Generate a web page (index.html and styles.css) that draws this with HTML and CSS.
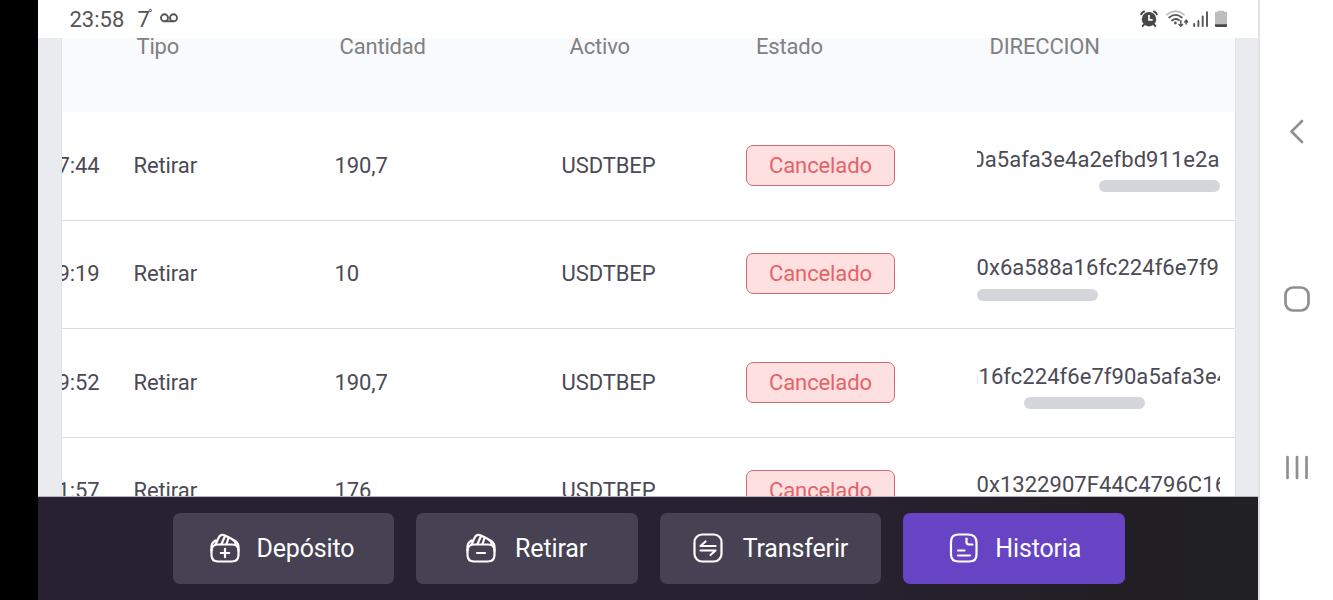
FILE: index.html
```html
<!DOCTYPE html>
<html lang="es">
<head>
  <meta charset="UTF-8" />
  <meta name="viewport" content="width=device-width, initial-scale=1" />
  <title>Historia</title>
  <link rel="stylesheet" href="styles.css">
</head>
<body>
  <div class="cutout"></div>

  <div class="app">
    <header class="status">
      <span class="time">23:58</span>
      <span class="temp">7<span class="degree">°</span></span>
      <svg class="voicemail" width="18" height="10" viewBox="0 0 18 10" fill="none" stroke="#555" stroke-width="1.9">
        <circle cx="4.5" cy="4.8" r="3.5"/><circle cx="13.5" cy="4.8" r="3.5"/><path d="M4.5 8.3h9"/>
      </svg>
      <div class="status-icons">
        <svg width="18" height="18" viewBox="0 0 18 18">
          <g fill="none" stroke="#484848" stroke-width="2" stroke-linecap="round">
            <path d="M1.2 4.2Q2.2 2.2 4.1 1.5M16.8 4.2Q15.8 2.2 13.9 1.5M4.2 14.4L2.7 16M13.8 14.4l1.5 1.6"/>
          </g>
          <circle cx="9" cy="9.2" r="7.2" fill="#484848"/>
          <path d="M9 5v4.9h3.7" fill="none" stroke="#fff" stroke-width="1.7"/>
        </svg>
        <svg class="wifi" width="23" height="18" viewBox="0 0 23 18" fill="none" stroke="#555" stroke-width="1.8" stroke-linecap="round">
          <path d="M1 4.6Q9.5-2.3 18 4.6" stroke="#bbb"/>
          <path d="M3.2 7.5Q9.5 2.3 15.8 7.5M6 10.5Q9.5 7.6 13 10.2"/>
          <circle cx="9.4" cy="13" r="1.4" fill="#555" stroke="none"/>
          <path d="M14.8 10.8v5M13 14.5l1.8 1.8 1.8-1.8M20.2 14v-3.5M18.7 11.9l1.5-1.7 1.5 1.7" stroke-width="1.5"/>
        </svg>
        <svg class="signal" width="16" height="18" viewBox="0 0 16 18" stroke="#555" stroke-width="1.9" stroke-linecap="round">
          <path d="M1.2 14v2M5.4 11v5M9.7 6.5V16M14 2.2V16"/>
        </svg>
        <svg class="battery" width="12" height="18" viewBox="0 0 12 18">
          <path d="M3 1.8V.8h6v1h2q1 0 1 1v12.4H0V2.8q0-1 1-1z" fill="#bdbdbd"/>
          <path d="M0 14.3h12v1.6q0 1-1 1H1q-1 0-1-1z" fill="#484848"/>
        </svg>
      </div>
    </header>

    <main class="content">
      <div class="table">
        <div class="row head">
          <div></div>
          <div class="h-tipo">Tipo</div>
          <div class="h-cantidad">Cantidad</div>
          <div class="h-activo">Activo</div>
          <div class="h-estado">Estado</div>
          <div class="h-direccion">DIRECCION</div>
        </div>
        <div class="row">
          <div class="date">7:44</div>
          <div>Retirar</div>
          <div>190,7</div>
          <div>USDTBEP</div>
          <div><span class="badge">Cancelado</span></div>
          <div class="address scroll-end"><span>0a5afa3e4a2efbd911e2a</span><i class="thumb"></i></div>
        </div>
        <div class="row">
          <div class="date">9:19</div>
          <div>Retirar</div>
          <div>10</div>
          <div>USDTBEP</div>
          <div><span class="badge">Cancelado</span></div>
          <div class="address"><span>0x6a588a16fc224f6e7f9</span><i class="thumb"></i></div>
        </div>
        <div class="row">
          <div class="date">9:52</div>
          <div>Retirar</div>
          <div>190,7</div>
          <div>USDTBEP</div>
          <div><span class="badge">Cancelado</span></div>
          <div class="address scroll-mid"><span>a16fc224f6e7f90a5afa3e4</span><i class="thumb"></i></div>
        </div>
        <div class="row">
          <div class="date">1:57</div>
          <div>Retirar</div>
          <div>176</div>
          <div>USDTBEP</div>
          <div><span class="badge">Cancelado</span></div>
          <div class="address"><span>0x1322907F44C4796C16</span><i class="thumb"></i></div>
        </div>
      </div>
    </main>

    <footer class="actions">
      <button class="action deposito">
        <svg width="30" height="30" viewBox="0 0 30 30">
          <path d="M1.500 18q0-6.500 6.500-6.500h14q6.500 0 6.500 6.500v4q0 6.500-6.500 6.500H8Q1.500 28.500 1.500 22z"/>
          <path d="M1.500 18v-4.500q0-3.500 4-6M28.500 18v-4q0-4-4-6.500M5.500 11.500l3-6.500q2-4.500 6.500-2.500l6 3q5 2.500 4.500 6.500M11.500 11l3.500-8M16.500 11l2-6"/>
          <path d="M15 15.800v8.400M10.800 20h8.400"/>
        </svg>
        <span>Depósito</span>
      </button>
      <button class="action retirar">
        <svg width="30" height="30" viewBox="0 0 30 30">
          <path d="M1.500 18q0-6.500 6.500-6.500h14q6.500 0 6.500 6.500v4q0 6.500-6.500 6.500H8Q1.500 28.500 1.500 22z"/>
          <path d="M1.500 18v-4.500q0-3.500 4-6M28.500 18v-4q0-4-4-6.500M5.500 11.500l3-6.500q2-4.500 6.500-2.500l6 3q5 2.500 4.500 6.500M11.500 11l3.500-8M16.500 11l2-6"/>
          <path d="M11 20h8"/>
        </svg>
        <span>Retirar</span>
      </button>
      <button class="action transferir">
        <svg width="30" height="30" viewBox="0 0 30 30">
          <rect x="1.500" y="1.500" width="27" height="27" rx="7.500"/>
          <path d="M22.500 13h-15l5-4.500M7.500 17.500h15l-5 4.500"/>
        </svg>
        <span>Transferir</span>
      </button>
      <button class="action historia active">
        <svg width="30" height="30" viewBox="0 0 30 30">
          <path d="M19 1.500H9.500Q2 1.500 2 9v12.500q0 7 7.500 7h11q7 0 7-7V9.500q0-8-8.500-8z"/>
          <path d="M17.500 5.500V9q0 2.500 2.500 2.500h3.500M9 17.500h6.500M9 22.500h12"/>
        </svg>
        <span>Historia</span>
      </button>
    </footer>
  </div>

  <nav class="system-nav">
    <svg width="26" height="26" viewBox="0 0 26 26"><path d="M18 3L7.500 13.500 18 24"/></svg>
    <svg width="26" height="26" viewBox="0 0 26 26"><rect x="1.500" y="1.500" width="23" height="23" rx="7.500"/></svg>
    <svg width="26" height="26" viewBox="0 0 26 26"><path d="M3.500 3v21M13 3v21M22.500 3v21"/></svg>
  </nav>
</body>
</html>
```
FILE: styles.css
```css
* {
  box-sizing: border-box;
}
body {
  margin: 0;
  height: 600px;
  display: flex;
  overflow: hidden;
  background: #000;
  font-family: Roboto, sans-serif;
  font-size: 22px;
  color: #4b4a55;
}
.cutout {
  width: 37.5px;
  background: #000;
}
.app {
  width: 1220.5px;
  display: flex;
  flex-direction: column;
  background: #e9ebef;
}

/* status bar */
.status {
  height: 38px;
  display: flex;
  align-items: center;
  padding: 0 31.5px 0 32px;
  background: #fff;
  color: #555;
}
.time {
  width: 68px;
}
.temp {
  width: 22px;
  display: flex;
}
.degree {
  font-size: 12px;
  margin-left: -2px;
}
.voicemail {
  margin-top: -2px;
}
.status-icons {
  display: flex;
  margin-left: auto;
}
.wifi { margin-left: 8px; }
.signal { margin-left: 4px; }
.battery { margin-left: 6px; }

/* table */
.content {
  height: 459px;
  overflow: hidden;
  padding: 0 22px 0 23px;
  border-bottom: 1px solid #b5b5bb;
}
.table {
  background: #fff;
  border: solid #e1e2e5;
  border-width: 0 1px;
}
.row {
  display: grid;
  grid-template-columns: 72px 201px 227px 184.5px 230.5px 243px;
  align-items: center;
  height: 108.5px;
  padding-bottom: 1px;
  border-bottom: 1px solid #dcdcdd;
  letter-spacing: -0.1px;
}
.row.head {
  height: 74px;
  align-items: start;
  border: none;
  background: #f8fafc;
  color: #808083;
  line-height: 18px;
  letter-spacing: -0.18px;
}
.h-tipo { padding-left: 3px; }
.h-cantidad { padding-left: 5px; }
.h-activo { padding-left: 8px; }
.h-estado { padding-left: 10px; }
.h-direccion { padding-left: 13px; }
.date {
  display: flex;
  justify-content: flex-end;
  width: 38px;
  overflow: hidden;
}
.badge {
  display: inline-block;
  width: 149px;
  height: 41px;
  line-height: 39px;
  text-align: center;
  border: 1px solid #cf6c70;
  border-radius: 7px;
  background: #ffe0e0;
  color: #e36468;
}
.address {
  display: flex;
  flex-direction: column;
  align-items: flex-start;
  overflow: hidden;
  padding-top: 8px;
  letter-spacing: 0.05px;
}
.address span {
  line-height: 26px;
  white-space: nowrap;
}
.thumb {
  width: 121px;
  height: 12px;
  margin-top: 7.5px;
  border-radius: 6px;
  background: #d5d6dc;
}
.scroll-end { align-items: flex-end; }
.scroll-mid span { margin-left: -10px; }
.scroll-mid .thumb { margin-left: 47px; }

/* bottom buttons */
.actions {
  height: 103px;
  display: flex;
  gap: 22px;
  padding: 16px 133px 0 135px;
  background: linear-gradient(90deg, #282132 0%, #282132 65%, #211f24 88%, #212023 100%);
}
.action {
  width: 221.6px;
  height: 71px;
  display: flex;
  align-items: center;
  padding: 0 0 1px;
  border: none;
  border-radius: 7px;
  background: #464254;
  color: #fff;
  font-family: inherit;
  font-size: 25px;
  letter-spacing: -0.15px;
}
.action.active {
  background: #6644c4;
}
.action svg {
  fill: none;
  stroke: #fff;
  stroke-width: 2.2;
  stroke-linecap: round;
  stroke-linejoin: round;
}
.deposito { padding-left: 37px; gap: 17px; }
.retirar { padding-left: 50px; gap: 19px; }
.transferir { padding-left: 33px; gap: 20px; }
.historia { padding-left: 46px; gap: 16px; }

/* phone navigation */
.system-nav {
  width: 75px;
  display: flex;
  flex-direction: column;
  align-items: center;
  gap: 142px;
  padding-top: 118px;
  background: #fff;
  border-left: 2px solid #e2e2e3;
}
.system-nav svg {
  fill: none;
  stroke: #909090;
  stroke-width: 2.7;
  stroke-linecap: round;
  stroke-linejoin: round;
}
```
